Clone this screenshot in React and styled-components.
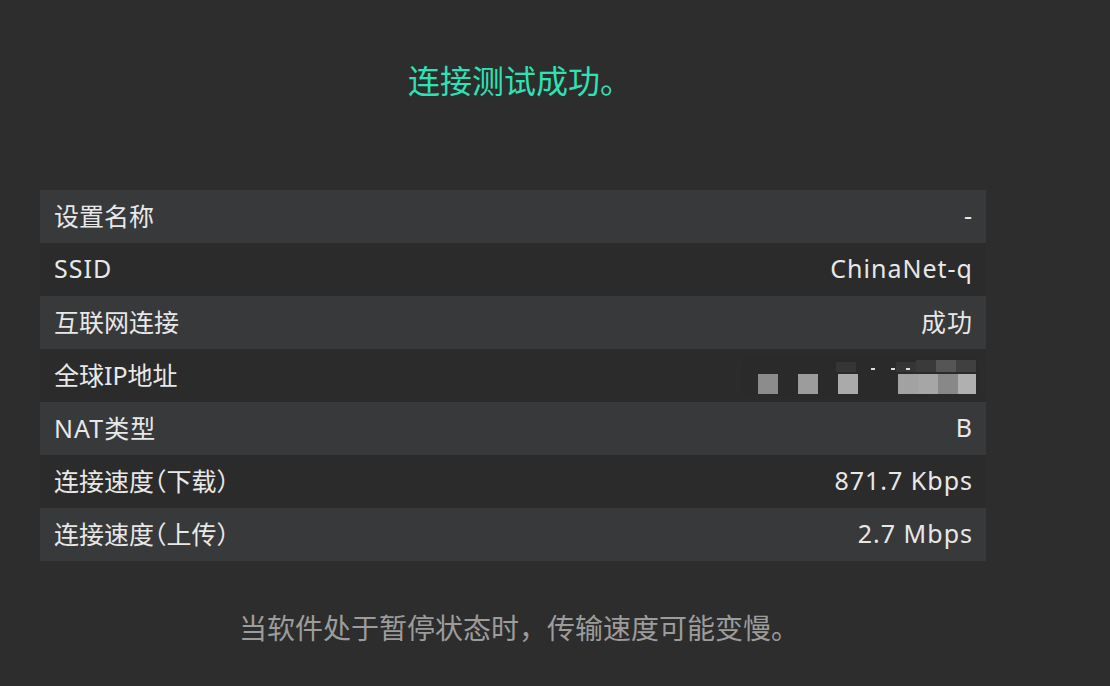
import React from 'react';
import styled, { createGlobalStyle } from 'styled-components';

const GlobalStyle = createGlobalStyle`
  html, body {
    margin: 0;
    padding: 0;
    background: #2d2d2d;
  }
  body {
    font-family: 'Noto Sans', 'Noto Sans CJK SC', sans-serif;
  }
`;

const Page = styled.div`
  width: 1110px;
  height: 686px;
  background: #2d2d2d;
  box-sizing: border-box;
  padding: 57px 0 0 40px;
  overflow: hidden;
`;

const Column = styled.div`
  width: 946px;
  display: flex;
  flex-direction: column;
  align-items: stretch;
`;

const Title = styled.h1`
  margin: 0;
  text-align: center;
  font-size: 32px;
  font-weight: 400;
  line-height: 44px;
  color: #2de2b4;
  font-family: 'Noto Sans CJK SC', sans-serif;
  padding-left: 14px;
`;

const Table = styled.div`
  margin-top: 89px;
  display: flex;
  flex-direction: column;
`;

const Row = styled.div`
  height: 53px;
  display: flex;
  align-items: center;
  justify-content: space-between;
  padding: 0 14px;
  background: ${(p) => (p.$shade ? '#38393b' : '#2b2b2b')};
  color: #e8e8e8;
  font-size: 25px;
  letter-spacing: 1px;
  box-sizing: border-box;
`;

const Label = styled.span`
  font-family: 'Noto Sans', 'Noto Sans CJK SC', sans-serif;
  font-feature-settings: 'halt';
  letter-spacing: ${(p) => (p.$cjk ? '0' : '1px')};
  margin-top: -3px;
`;

const Value = styled.span`
  font-family: 'Noto Sans', 'Noto Sans CJK SC', sans-serif;
  margin-top: -3px;
  margin-right: -1px;
`;

const Note = styled.p`
  margin: 46px 0 0;
  padding-left: 12px;
  text-align: center;
  color: #9c9c9c;
  font-size: 28px;
  line-height: 40px;
  font-family: 'Noto Sans CJK SC', sans-serif;
`;

const Mosaic = () => (
  <svg width="240" height="44" viewBox="0 0 240 44" style={{ marginRight: -6 }}>
    <path d="M4 10 Q4 2 14 2 L238 4 Q240 6 240 14 L240 40 Q120 48 4 40 Z" fill="#2a2a2a" />
    <rect x="178" y="6" width="40" height="12" fill="#3a3a3a" />
    <rect x="198" y="6" width="20" height="12" fill="#555" />
    <rect x="218" y="6" width="20" height="12" fill="#404040" />
    <rect x="158" y="8" width="20" height="10" fill="#353535" />
    <rect x="98" y="8" width="20" height="10" fill="#353535" />
    <rect x="20" y="20" width="20" height="20" fill="#8c8c8c" />
    <rect x="60" y="20" width="20" height="20" fill="#9c9c9c" />
    <rect x="100" y="20" width="20" height="20" fill="#aaaaaa" />
    <rect x="160" y="20" width="20" height="20" fill="#a2a2a2" />
    <rect x="180" y="20" width="20" height="20" fill="#a6a6a6" />
    <rect x="200" y="20" width="20" height="20" fill="#888" />
    <rect x="220" y="20" width="18" height="20" fill="#b0b0b0" />
    <rect x="133" y="14" width="4" height="2" fill="#ddd" />
    <rect x="153" y="14" width="4" height="2" fill="#ddd" />
    <rect x="168" y="14" width="4" height="2" fill="#ddd" />
  </svg>
);

const rows = [
  ['设置名称', '-', true],
  ['SSID', 'ChinaNet-q', false],
  ['互联网连接', '成功', true],
  ['全球IP地址', null, true],
  ['NAT类型', 'B', false],
  ['连接速度（下载）', '871.7 Kbps', true],
  ['连接速度（上传）', '2.7 Mbps', true],
];

export default function App() {
  return (
    <>
      <GlobalStyle />
      <Page>
        <Column>
          <Title>连接测试成功。</Title>
          <Table>
            {rows.map(([label, value, cjk], i) => (
              <Row key={label} $shade={i % 2 === 0}>
                <Label $cjk={cjk}>{label}</Label>
                {value === null ? <Mosaic /> : <Value>{value}</Value>}
              </Row>
            ))}
          </Table>
          <Note>当软件处于暂停状态时，传输速度可能变慢。</Note>
        </Column>
      </Page>
    </>
  );
}
